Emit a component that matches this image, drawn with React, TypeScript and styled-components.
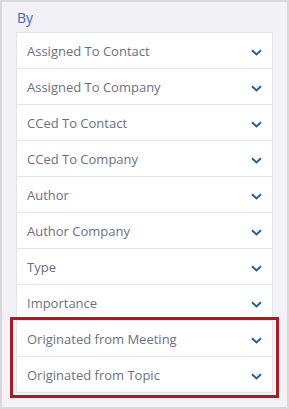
import React from "react";
import styled, { createGlobalStyle } from "styled-components";

const Global = createGlobalStyle`
  html, body { margin: 0; padding: 0; background: #f1f1f6; }
  * { box-sizing: border-box; }
`;

const Panel = styled.div`
  width: 289px;
  height: 409px;
  border: 2px solid #d9d9dd;
  background: #f1f1f6;
  padding: 6px 14px 0 14px;
  font-family: "Open Sans", sans-serif;
`;

const Title = styled.div`
  color: #4767c4;
  font-size: 14px;
  line-height: 19px;
  padding-left: 1px;
  margin-bottom: 5px;
`;

const ListWrap = styled.div`
  position: relative;
`;

const List = styled.div`
  display: flex;
  flex-direction: column;
  background: #ffffff;
  border: 1px solid #e2e2e8;
`;

const Row = styled.div`
  height: 36px;
  display: flex;
  align-items: center;
  justify-content: space-between;
  padding: 0 10px 0 10px;
  border-top: 1px solid #e4e4ea;
  &:first-child { border-top: none; height: 35px; }
  color: #6d6f7e;
  font-size: 13px;
`;

const Highlight = styled.div`
  position: absolute;
  left: -6px;
  right: -6px;
  bottom: -5px;
  height: 81px;
  border: 3px solid #a51c24;
  pointer-events: none;
`;

const Chevron = () => (
  <svg width="11" height="7" viewBox="0 0 11 7" style={{ marginTop: 3 }}>
    <path d="M1 1.2 L5.5 5.4 L10 1.2" fill="none" stroke="#1f5fa6" strokeWidth="2" />
  </svg>
);

const items = [
  "Assigned To Contact",
  "Assigned To Company",
  "CCed To Contact",
  "CCed To Company",
  "Author",
  "Author Company",
  "Type",
  "Importance",
  "Originated from Meeting",
  "Originated from Topic",
];

export default function App() {
  return (
    <>
      <Global />
      <Panel>
        <Title>By</Title>
        <ListWrap>
          <List>
            {items.map((t) => (
              <Row key={t}>
                <span>{t}</span>
                <Chevron />
              </Row>
            ))}
          </List>
          <Highlight />
        </ListWrap>
      </Panel>
    </>
  );
}
